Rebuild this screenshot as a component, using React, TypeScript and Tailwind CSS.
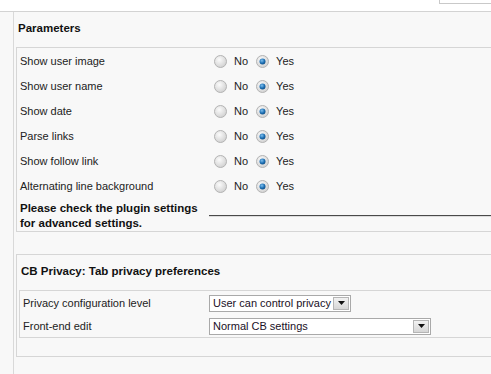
import React from "react";

const font = { fontFamily: '"Liberation Sans", Arial, sans-serif' };

function Radio({ checked }: { checked?: boolean }) {
  return (
    <svg width="13" height="13" viewBox="0 0 13 13" className="shrink-0">
      <defs>
        <radialGradient id="rg" cx="0.4" cy="0.35" r="0.7">
          <stop offset="0" stopColor="#fbfbfb" />
          <stop offset="1" stopColor="#cfcfcf" />
        </radialGradient>
        <radialGradient id="dot" cx="0.4" cy="0.35" r="0.7">
          <stop offset="0" stopColor="#7fc0ef" />
          <stop offset="0.6" stopColor="#1d6fb3" />
          <stop offset="1" stopColor="#0e4b80" />
        </radialGradient>
      </defs>
      <circle cx="6.5" cy="6.5" r="6" fill="url(#rg)" stroke="#b3b3b3" strokeWidth="1" />
      {checked && <circle cx="6.5" cy="6.5" r="3" fill="url(#dot)" />}
    </svg>
  );
}

function YesNo() {
  return (
    <div className="flex items-center pl-[5px]">
      <Radio />
      <span className="ml-[7px]">No</span>
      <span className="ml-[8px]">
        <Radio checked />
      </span>
      <span className="ml-[7px]">Yes</span>
    </div>
  );
}

function Select({ value, width }: { value: string; width: string }) {
  return (
    <div className={`flex items-center h-[17px] bg-white border border-[#a9a9a9] ${width}`}>
      <span className="flex-1 pl-[3px] text-[11px] text-[#1a1026] leading-none whitespace-nowrap overflow-hidden">
        {value}
      </span>
      <span className="flex items-center justify-center shrink-0 w-[16px] h-[13px] mr-[1px] bg-linear-to-b from-[#f2f2f2] to-[#d6d6d6] border border-[#b5b5b5]">
        <svg width="7" height="4" viewBox="0 0 7 4">
          <path d="M0 0h7L3.5 4z" fill="#111" />
        </svg>
      </span>
    </div>
  );
}

const params = [
  "Show user image",
  "Show user name",
  "Show date",
  "Parse links",
  "Show follow link",
  "Alternating line background",
];

export default function App() {
  return (
    <div style={font} className="w-[491px] h-[374px] overflow-hidden bg-[#f8f8f8] text-[11px] text-[#222]">
      {/* top strip */}
      <div className="h-[11px] bg-white flex justify-end">
        <div className="w-[52px] h-[4px] bg-white border border-t-0 border-r-0 border-[#c9c9c9]" />
      </div>

      <div className="flex border-t border-[#d3d3d3] h-[363px]">
        <div className="w-[14px] shrink-0 border-r border-[#d9d9d9]" />

        <div className="flex-1 pl-[2px]">
          <div className="h-[35px] pl-[2px] pt-[8px] font-bold text-[11.5px] text-[#111]">Parameters</div>

          {/* parameters box */}
          <div className="border-t border-l border-b border-[#d6d6d6] pl-[3px] pt-[1px]">
            {params.map((p) => (
              <div key={p} className="flex items-center h-[25px]">
                <div className="w-[189px] shrink-0">{p}</div>
                <YesNo />
              </div>
            ))}
            <div className="flex items-center pt-[2px]">
              <div className="w-[189px] shrink-0 font-bold text-[11.5px] leading-[15px] text-[#111]">
                Please check the plugin settings for advanced settings.
              </div>
              <div className="flex-1 h-[2px] border-t border-[#4a4a4a] bg-[#dcdcdc]" />
            </div>
          </div>

          {/* privacy box */}
          <div className="mt-[22px] border-t border-l border-b border-[#d6d6d6] pb-[18px]">
            <div className="h-[35px] pl-[4px] pt-[8px] font-bold text-[11.5px] text-[#111]">
              CB Privacy: Tab privacy preferences
            </div>
            <div className="ml-[2px] border-t border-l border-b border-[#d6d6d6] pl-[3px]">
              <div className="flex items-center h-[24px]">
                <div className="w-[186px] shrink-0">Privacy configuration level</div>
                <Select value="User can control privacy" width="w-[142px]" />
              </div>
              <div className="flex items-center h-[22px]">
                <div className="w-[186px] shrink-0">Front-end edit</div>
                <Select value="Normal CB settings" width="w-[222px]" />
              </div>
            </div>
          </div>
        </div>
      </div>
    </div>
  );
}
